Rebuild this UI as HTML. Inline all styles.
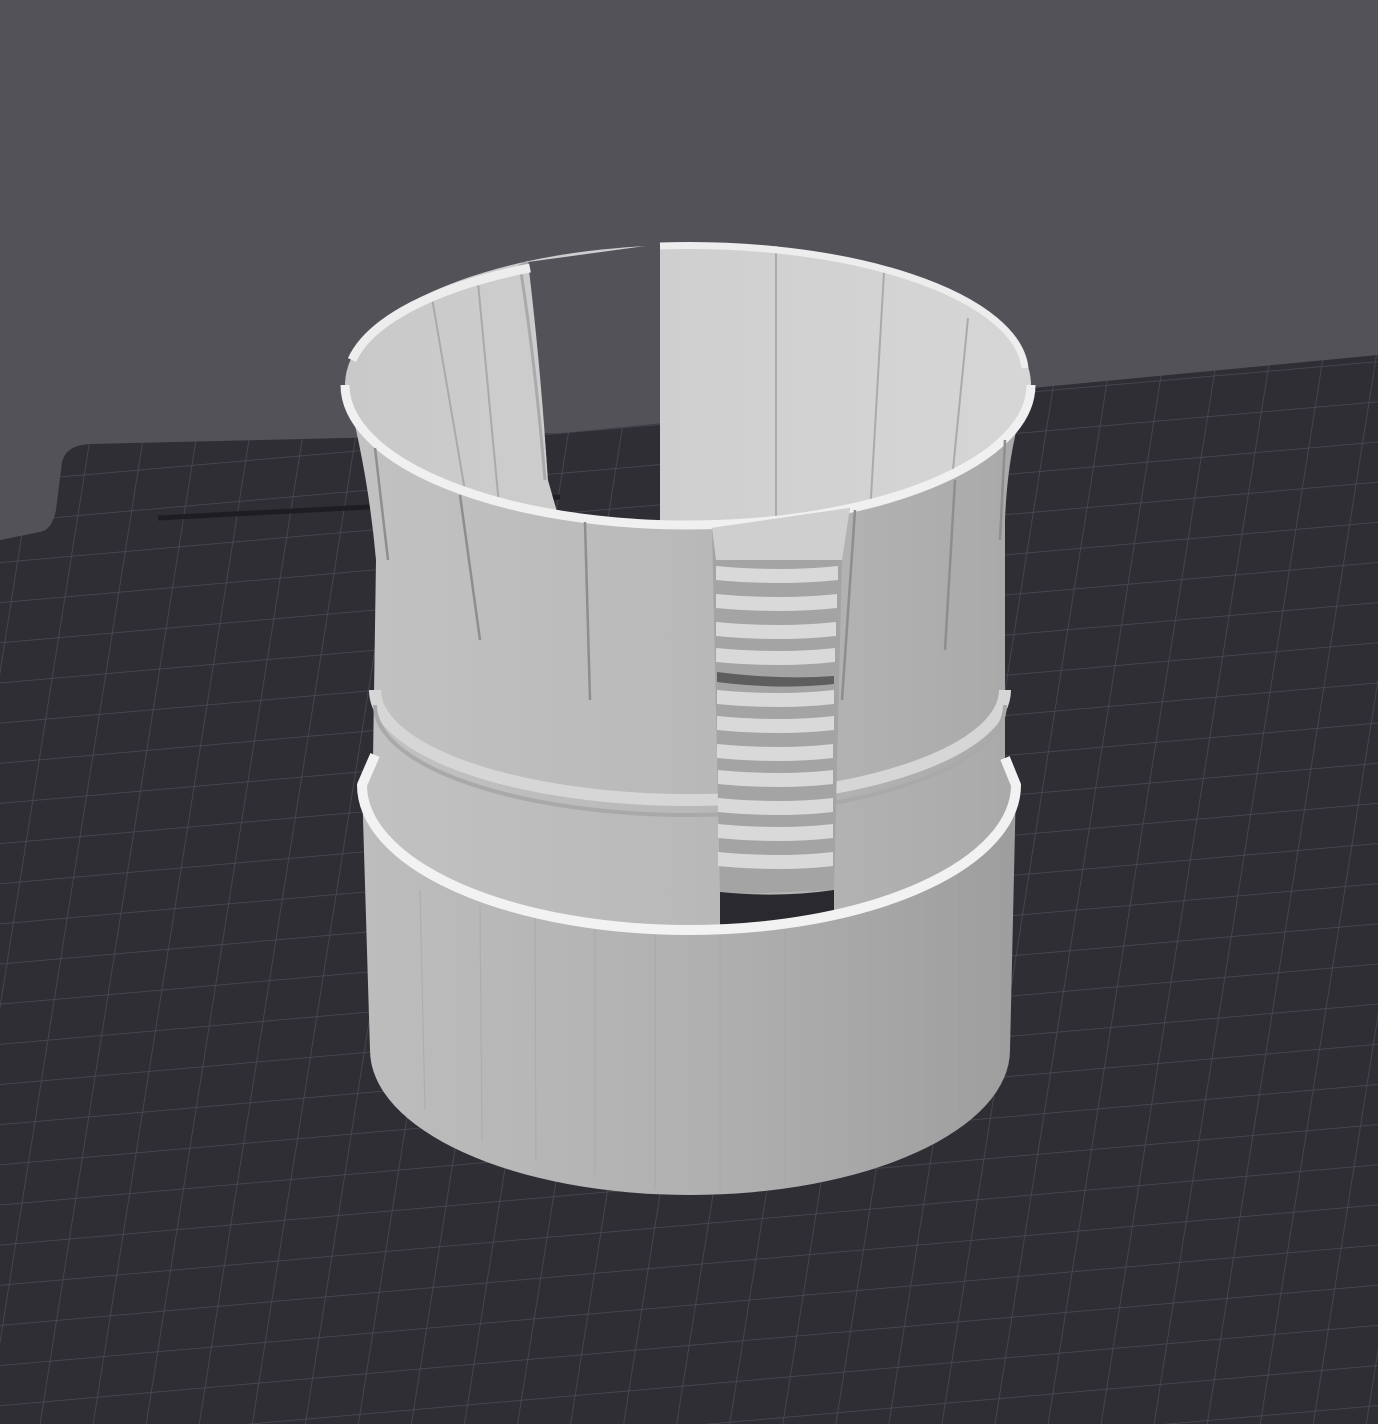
<!DOCTYPE html>
<html><head><style>html,body{margin:0;padding:0;background:#545259;overflow:hidden}svg{display:block}</style></head>
<body>
<svg width="1378" height="1424" viewBox="0 0 1378 1424" xmlns="http://www.w3.org/2000/svg">
<defs>
<pattern id="grid" width="54" height="40" patternUnits="userSpaceOnUse" patternTransform="rotate(-5) skewX(-14)">
<rect width="54" height="40" fill="#2f2e35"/>
<path d="M0 0H54M0 0V40" stroke="#4d4c54" stroke-width="1.5"/>
</pattern>
<clipPath id="plate"><path d="M0,540 L40,532 Q52,530 56,510 L62,462 Q66,445 90,444 L560,433 L1378,355 L1378,1424 L0,1424Z"/></clipPath>
<g id="bg">
<rect width="1378" height="1424" fill="#545259"/>
<g clip-path="url(#plate)"><rect x="-200" y="300" width="1800" height="1200" fill="url(#grid)"/></g>
<path d="M158,518 L560,497" stroke="#1e1d22" stroke-width="5"/>
</g>
<clipPath id="gap"><path d="M528,262 Q540,360 548,480 L560,522 L650,526 L660,520 L660,244 Z"/></clipPath>
<linearGradient id="baseG" x1="0" x2="1"><stop offset="0" stop-color="#bdbdbd"/><stop offset="0.5" stop-color="#b1b1b1"/><stop offset="1" stop-color="#9e9e9e"/></linearGradient>
<linearGradient id="upG" x1="0" x2="1"><stop offset="0" stop-color="#c2c2c2"/><stop offset="0.5" stop-color="#b9b9b9"/><stop offset="1" stop-color="#a9a9a9"/></linearGradient>
<linearGradient id="inG" x1="0" x2="1"><stop offset="0" stop-color="#c9c9c9"/><stop offset="1" stop-color="#d6d6d6"/></linearGradient>
</defs>
<use href="#bg"/>
<!-- base -->
<path d="M362,785 A327,145 0 0 0 1016,785 L1010,1050 A320,145 0 0 1 370,1050 Z" fill="url(#baseG)"/>
<g stroke="#a6a6a6" stroke-width="1.2" opacity="0.6">
<path d="M420,890 L425,1110M480,905 L482,1140M535,915 L536,1160M595,920 L595,1175M655,925 L655,1190M720,925 L720,1192M785,920 L785,1185M850,910 L850,1170M905,895 L905,1145M955,875 L955,1115"/>
</g>
<!-- upper body interior -->
<ellipse cx="688" cy="385" rx="343" ry="140" fill="url(#inG)"/>
<g stroke="#aaa" stroke-width="2">
<path d="M432,298 L470,520M478,283 L500,515M776,246 L776,520M884,272 L870,515M968,318 L950,500"/>
</g>
<use href="#bg" clip-path="url(#gap)"/>
<path d="M528,262 L520,266 Q535,360 545,480" fill="none" stroke="#aaa" stroke-width="3"/>
<!-- front wall -->
<path d="M345,385 Q368,470 376,560 L373,760 L362,785 A327,145 0 0 0 1016,785 L1005,760 L1005,520 Q1008,440 1031,385 A343,140 0 0 1 345,385 Z" fill="url(#upG)"/>
<!-- top rim highlight -->
<path d="M345,385 A343,140 0 0 0 1031,385" fill="none" stroke="#f0f0f0" stroke-width="9"/>
<path d="M352,360 A336,128 0 0 1 530,268" fill="none" stroke="#ededed" stroke-width="9"/>
<path d="M660,246 A336,128 0 0 1 1025,368" fill="none" stroke="#ededed" stroke-width="7"/>
<!-- slits -->
<g stroke="#8e8e8e" stroke-width="2.5">
<path d="M375,448 L388,560M460,495 L480,640M585,522 L590,700M855,510 L842,700M955,480 L945,650M1005,440 L1000,540"/>
</g>
<!-- groove band -->
<path d="M375,690 A315,110 0 0 0 1005,690" fill="none" stroke="#d6d6d6" stroke-width="12"/>
<path d="M375,705 A315,110 0 0 0 1005,705" fill="none" stroke="#a9a9a9" stroke-width="4"/>
<!-- stairs cutout -->
<path d="M712,528 L850,508 L842,560 L834,890 L720,895 Z" fill="#a4a4a4"/>
<path d="M712,528 L850,508 L842,560 L716,560 Z" fill="#cfcfcf"/>
<g fill="#d9d9d9">
<path d="M716,566 Q780,572 838,566 L838,580 Q780,586 716,580Z"/>
<path d="M716,594 Q780,600 837,594 L837,608 Q780,614 716,608Z"/>
<path d="M716,622 Q780,628 836,622 L836,636 Q780,642 716,636Z"/>
<path d="M716,648 Q780,654 835,648 L835,662 Q780,668 716,662Z"/>
<path d="M717,690 Q780,696 834,690 L834,704 Q780,710 717,704Z"/>
<path d="M717,716 Q780,722 834,716 L834,730 Q780,736 717,730Z"/>
<path d="M717,744 Q780,750 833,744 L833,758 Q780,764 717,758Z"/>
<path d="M718,770 Q780,776 833,770 L833,784 Q780,790 718,784Z"/>
<path d="M718,798 Q780,804 833,798 L833,812 Q780,818 718,812Z"/>
<path d="M718,824 Q780,830 833,824 L833,838 Q780,844 718,838Z"/>
<path d="M718,852 Q780,858 833,852 L833,866 Q780,872 718,866Z"/>
</g>
<path d="M717,672 Q780,680 834,676 L834,684 Q780,690 717,682Z" fill="#5e5e5e"/>
<path d="M720,892 Q780,898 834,890 L834,918 Q780,922 720,926Z" fill="#2a292e"/>
<!-- base rim -->
<path d="M375,755 L362,785 A327,145 0 0 0 1016,785 L1005,758" fill="none" stroke="#f2f2f2" stroke-width="10" stroke-linejoin="round"/>
</svg>
</body></html>
